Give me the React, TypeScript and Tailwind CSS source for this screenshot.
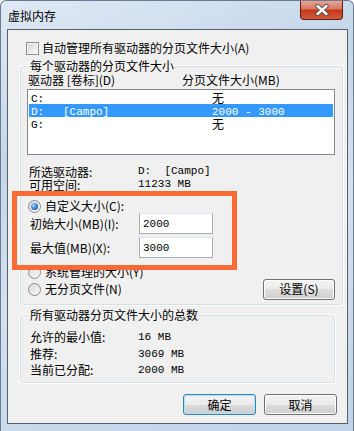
import React from "react";

const M = ({ children }: { children: React.ReactNode }) => (
  <span className="font-['Liberation_Mono'] text-[11px]">{children}</span>
);

const Radio = ({ checked }: { checked?: boolean }) => (
  <span className="relative inline-flex w-[13px] h-[13px] rounded-full border border-[#8a8a8a] bg-gradient-to-br from-[#d8d8d8] to-[#fbfbfb] items-center justify-center shrink-0">
    {checked && (
      <span className="w-[7px] h-[7px] rounded-full bg-[radial-gradient(circle_at_35%_35%,#9fd4ff,#1a64b8_70%,#0c3f86)]" />
    )}
  </span>
);

const Btn = ({ children, def, w }: { children: React.ReactNode; def?: boolean; w: string }) => (
  <div
    className={`${w} h-[21px] rounded-[3px] border ${
      def ? "border-[#3c7fb1] shadow-[inset_0_0_0_1px_#a8e4fb]" : "border-[#707070] shadow-[inset_0_0_0_1px_#fcfcfc]"
    } bg-[linear-gradient(#f2f2f2_0%,#ebebeb_50%,#dddddd_50%,#cfcfcf_100%)] flex items-center justify-center text-[12px] leading-[14px] text-black`}
  >
    {children}
  </div>
);

export default function App() {
  return (
    <div
      className="relative w-[354px] h-[431px] overflow-hidden bg-[linear-gradient(160deg,#dfe9f5_0%,#c4d6ea_30%,#d3e1f0_55%,#bfd2e8_100%)] border-l border-t border-r border-[#6b7a8c] rounded-tl-[6px] rounded-tr-[6px] text-black"
      style={{ fontFamily: "'Noto Sans CJK SC', sans-serif" }}
    >
      {/* title bar */}
      <div className="h-[28px] flex items-start justify-between">
        <div className="pl-[7px] pt-[7px] text-[12px] leading-[16px] text-black">虚拟内存</div>
        <div className="mr-[10px] w-[43px] h-[19px] rounded-b-[4px] border border-t-0 border-[#5c1d12] bg-[linear-gradient(#e8a597_0%,#d7745f_45%,#c4361c_50%,#d35b3c_100%)] flex items-center justify-center">
          <svg width="14" height="12" viewBox="0 0 14 12">
            <path d="M2.5 2 L11.5 10 M11.5 2 L2.5 10" stroke="#4a4a4a" strokeWidth="4.2" strokeLinecap="round" />
            <path d="M2.5 2 L11.5 10 M11.5 2 L2.5 10" stroke="#ffffff" strokeWidth="2.4" strokeLinecap="round" />
          </svg>
        </div>
      </div>

      {/* client area */}
      <div className="ml-[6px] w-[341px] h-[395px] border border-[#57606b] bg-[#f0f0f0] text-[12px] leading-[14px]">
        {/* auto checkbox */}
        <div className="flex items-center mt-[11px] ml-[18px] h-[14px]">
          <span className="w-[13px] h-[13px] border border-[#8e8f8f] bg-gradient-to-br from-[#d6d6d6] to-[#fafafa] shadow-[inset_0_0_0_1px_#f4f4f4] shrink-0" />
          <span className="ml-[3px]">自动管理所有驱动器的分页文件大小(A)</span>
        </div>

        {/* group 1 */}
        <fieldset className="ml-[12px] mt-[4px] w-[315px] h-[246px] border border-[#d5dfe5] rounded-[3px] shadow-[0_0_0_1px_#ffffff] px-[7px]">
          <legend className="ml-[1px] px-[1px] leading-[14px]">每个驱动器的分页文件大小</legend>
          <div className="flex h-[13px] leading-[13px]">
            <span className="w-[154px]">驱动器 [卷标](D)</span>
            <span>分页文件大小(MB)</span>
          </div>
          <div className="mt-[3px] -ml-[1px] w-[308px] h-[66px] border border-[#828790] bg-white p-[1px] leading-[13px]">
            <div className="flex h-[13px] items-center pl-[2px]">
              <span className="w-[181px]"><M>C:</M></span>
              <span>无</span>
            </div>
            <div className="flex h-[13px] items-center pl-[2px] bg-[#3399ff] text-white">
              <span className="w-[32px]"><M>D:</M></span>
              <span className="w-[149px]"><M>[Campo]</M></span>
              <span><M>2000 - 3000</M></span>
            </div>
            <div className="flex h-[13px] items-center pl-[2px]">
              <span className="w-[181px]"><M>G:</M></span>
              <span>无</span>
            </div>
          </div>

          <div className="mt-[10px] flex h-[13px] items-center ml-[1px] leading-[13px]">
            <span className="w-[109px]">所选驱动器:</span>
            <M>D:&nbsp;&nbsp;[Campo]</M>
          </div>
          <div className="flex h-[13px] items-center ml-[1px] leading-[13px]">
            <span className="w-[109px]">可用空间:</span>
            <M>11233 MB</M>
          </div>

          <div className="mt-[8px] flex items-center h-[14px]">
            <Radio checked />
            <span className="ml-[4px]">自定义大小(C):</span>
          </div>
          <div className="mt-[0px] flex items-center h-[21px] ml-[2px]">
            <span className="w-[109px]">初始大小(MB)(I):</span>
            <div className="w-[74px] h-[21px] border border-[#abadb3] border-t-[#e3e9ef] bg-white flex items-center pl-[3px]">
              <M>2000</M>
            </div>
          </div>
          <div className="mt-[3px] flex items-center h-[21px] ml-[2px]">
            <span className="w-[109px]">最大值(MB)(X):</span>
            <div className="w-[74px] h-[21px] border border-[#abadb3] border-t-[#e3e9ef] bg-white flex items-center pl-[3px]">
              <M>3000</M>
            </div>
          </div>
          <div className="mt-[7px] flex items-center h-[14px]">
            <Radio />
            <span className="ml-[4px]">系统管理的大小(Y)</span>
          </div>
          <div className="mt-[1px] flex items-center justify-between h-[18px]">
            <div className="flex items-center">
              <Radio />
              <span className="ml-[4px]">无分页文件(N)</span>
            </div>
            <Btn w="w-[72px]">设置(S)</Btn>
          </div>
        </fieldset>

        {/* group 2 */}
        <fieldset className="ml-[12px] mt-[3px] w-[315px] h-[75px] border border-[#d5dfe5] rounded-[3px] shadow-[0_0_0_1px_#ffffff] px-[9px]">
          <legend className="-ml-[1px] px-[1px] leading-[14px]">所有驱动器分页文件大小的总数</legend>
          <div className="mt-[7px] flex items-center h-[16px]">
            <span className="w-[108px]">允许的最小值:</span>
            <M>16 MB</M>
          </div>
          <div className="flex items-center h-[17px]">
            <span className="w-[108px]">推荐:</span>
            <M>3069 MB</M>
          </div>
          <div className="flex items-center h-[16px]">
            <span className="w-[108px]">当前已分配:</span>
            <M>2000 MB</M>
          </div>
        </fieldset>

        {/* buttons */}
        <div className="mt-[11px] ml-[175px] flex gap-[8px]">
          <Btn def w="w-[73px]">确定</Btn>
          <Btn w="w-[73px]">取消</Btn>
        </div>
      </div>

      {/* orange highlight overlay */}
      <div className="absolute left-[11px] top-[190px] w-[225px] h-[79px] border-[5px] border-[#fa6a36] pointer-events-none" />
    </div>
  );
}
